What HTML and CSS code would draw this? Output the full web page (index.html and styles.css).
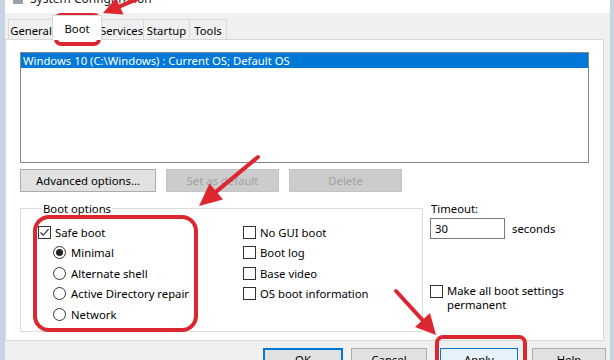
FILE: index.html
```html
<!doctype html>
<html>
<head>
	<title>System Configuration</title>
	<meta charset="utf-8"/>
	<link rel="stylesheet" href="styles.css">
</head>
<body>
	<div class="window">
		<div class="titlebar">
			<span class="app-icon"></span>
			<span class="title">System Configuration</span>
			<span class="close">&#10005;</span>
		</div>

		<div class="tabs">
			<div class="tab t-general">General</div>
			<div class="tab t-boot active">Boot</div>
			<div class="tab t-services">Services</div>
			<div class="tab t-startup">Startup</div>
			<div class="tab t-tools">Tools</div>
		</div>

		<div class="panel">
			<div class="oslist">
				<div class="os selected">Windows 10 (C:\Windows) : Current OS; Default OS</div>
			</div>

			<div class="btnrow">
				<button class="btn b-adv">Advanced options...</button>
				<button class="btn b-def" disabled>Set as default</button>
				<button class="btn b-del" disabled>Delete</button>
			</div>

			<div class="lower">
				<fieldset class="group">
					<legend>Boot options</legend>
					<div class="col col1">
						<div class="opt"><span class="check on"><svg width="11" height="11" viewBox="0 0 11 11"><path d="M1.5 5.5 L4.2 8.3 L9.6 2.2" fill="none" stroke="#222" stroke-width="1.1"/></svg></span>Safe boot</div>
						<div class="opt sub"><span class="radio on"></span>Minimal</div>
						<div class="opt sub"><span class="radio"></span>Alternate shell</div>
						<div class="opt sub"><span class="radio"></span>Active Directory repair</div>
						<div class="opt sub"><span class="radio"></span>Network</div>
					</div>
					<div class="col col2">
						<div class="opt"><span class="check"></span>No GUI boot</div>
						<div class="opt"><span class="check"></span>Boot log</div>
						<div class="opt"><span class="check"></span>Base video</div>
						<div class="opt"><span class="check"></span>OS boot information</div>
					</div>
				</fieldset>

				<div class="side">
					<div class="side-label">Timeout:</div>
					<div class="timeout">
						<span class="input">30</span>
						<span>seconds</span>
					</div>
					<div class="perm">
						<span class="check"></span>
						<span class="perm-text">Make all boot settings<br>permanent</span>
					</div>
				</div>
			</div>
		</div>

		<div class="footer">
			<button class="btn f-ok">OK</button>
			<button class="btn f-cancel">Cancel</button>
			<button class="btn f-apply">Apply</button>
			<button class="btn f-help">Help</button>
		</div>
	</div>

	<!-- red annotations drawn over the screenshot -->
	<svg class="marks" width="614" height="360" viewBox="0 0 614 360">
		<g fill="none" stroke="#dc2630" stroke-width="4" stroke-linecap="round">
			<rect x="56" y="15" width="43" height="29" rx="5"/>
			<rect x="35" y="217" width="161" height="113" rx="14"/>
			<rect x="437" y="337" width="88" height="32" rx="6"/>
			<line x1="152" y1="-7" x2="119.7" y2="6.3"/>
			<line x1="258" y1="157" x2="215.9" y2="191.9"/>
			<line x1="396" y1="291" x2="422.6" y2="320.2"/>
		</g>
		<g fill="#dc2630">
			<polygon points="103,13 123.5,14.5 116,-2"/>
			<polygon points="199,206 223,199.5 209.5,183.5"/>
			<polygon points="436,335 415,327 430,313"/>
		</g>
	</svg>
</body>
</html>
```

FILE: styles.css
```css
body{
	margin: 0;
	font-family: "Noto Sans", "Open Sans", sans-serif;
	font-size: 11.3px;
	color: #000;
}
.window{
	width: 614px;
	height: 360px;
	box-sizing: border-box;
	border-left: 5px solid #c7d4e3;
	border-right: 4px solid #c7d4e3;
	background: #f0f0f0;
	display: flex;
	flex-direction: column;
	overflow: hidden;
}

/* title bar, mostly cut off at the top */
.titlebar{
	height: 13px;
	flex: none;
	background: #fff;
	display: flex;
	overflow: hidden;
}
.app-icon{
	width: 10px;
	height: 4px;
	margin-left: 8px;
	background: #9aa3ad;
}
.title{
	margin: -9px 0 0 7px;
	line-height: 16px;
	font-size: 12px;
	color: #222;
}
.close{
	margin: -10px 0 0 auto;
	margin-right: 14px;
	font-size: 11px;
	line-height: 14px;
	color: #444;
}

/* tabs */
.tabs{
	height: 26px;
	flex: none;
	display: flex;
	align-items: flex-end;
	padding-left: 3px;
}
.tab{
	height: 20px;
	box-sizing: border-box;
	border: 1px solid #d9d9d9;
	border-bottom: none;
	border-left: none;
	padding-top: 3px;
	line-height: 16px;
	text-align: center;
	white-space: nowrap;
	background: #f0f0f0;
}
.t-general{ width: 46px; border-left: 1px solid #d9d9d9; }
.t-boot{ width: 50px; }
.t-services{ width: 44px; }
.t-startup{ width: 46px; }
.t-tools{ width: 37px; }
.tab.active{
	height: 25px;
	margin: 0 -2px -1px -2px;
	padding-top: 5px;
	background: #fff;
	border-left: 1px solid #d9d9d9;
	position: relative;
	z-index: 1;
}

/* main white panel */
.panel{
	height: 302px;
	flex: none;
	box-sizing: border-box;
	margin-right: 6px;
	border: 1px solid #d9d9d9;
	background: #fff;
	padding: 12px 0 0 14px;
}
.oslist{
	width: 569px;
	height: 111px;
	box-sizing: border-box;
	border: 1px solid #828790;
}
.os{
	height: 15px;
	line-height: 15px;
	padding-left: 2px;
	white-space: nowrap;
}
.os.selected{
	background: #0078d7;
	color: #fff;
}

.btnrow{
	display: flex;
	gap: 10px;
	margin-top: 6px;
}
.btn{
	height: 23px;
	box-sizing: border-box;
	border: 1px solid #adadad;
	background: #e1e1e1;
	font-family: inherit;
	font-size: 11.3px;
	color: #000;
	padding: 0;
}
.btn:disabled{
	background: #cccccc;
	border-color: #c4c4c4;
	color: #a2a2a2;
}
.b-adv{ width: 136px; }
.b-def{ width: 113px; }
.b-del{ width: 113px; }

/* boot options + timeout */
.lower{
	display: flex;
	margin-top: 9px;
}
.group{
	width: 403px;
	height: 131px;
	box-sizing: border-box;
	margin: 0;
	border: 1px solid #dcdcdc;
	padding: 6px 0 0 17px;
	display: flex;
}
.group legend{
	padding: 0 1px;
	margin-left: 4px;
	line-height: 15px;
}
.col1{ width: 205px; }
.opt{
	height: 20.5px;
	display: flex;
	align-items: center;
	white-space: nowrap;
}
.opt.sub{ padding-left: 15px; }
.check{
	width: 13px;
	height: 13px;
	box-sizing: border-box;
	border: 1px solid #333;
	margin-right: 4px;
	display: flex;
	align-items: center;
	justify-content: center;
	flex: none;
	background: #fff;
}
.radio{
	width: 13px;
	height: 13px;
	box-sizing: border-box;
	border: 1px solid #333;
	border-radius: 50%;
	margin-right: 5px;
	display: flex;
	align-items: center;
	justify-content: center;
	flex: none;
}
.radio.on::after{
	content: "";
	width: 7px;
	height: 7px;
	border-radius: 50%;
	background: #222;
}

.side{
	margin-left: 7px;
	display: flex;
	flex-direction: column;
}
.side-label{
	line-height: 15px;
	padding-left: 1px;
}
.timeout{
	display: flex;
	align-items: center;
	gap: 7px;
	margin-top: 2px;
}
.input{
	width: 75px;
	height: 21px;
	box-sizing: border-box;
	border: 1px solid #7a7a7a;
	padding-left: 4px;
	line-height: 19px;
}
.perm{
	display: flex;
	align-items: flex-start;
	margin-top: 45px;
}
.perm .check{ margin-top: 1px; }
.perm-text{
	line-height: 13.5px;
}

/* bottom buttons */
.footer{
	display: flex;
	justify-content: flex-end;
	padding: 7px 4px 0 0;
}
.footer .btn{ flex: none; }
.f-ok{ width: 80px; border: 1px solid #0078d7; box-shadow: inset 0 0 0 1px #0078d7; }
.f-cancel{ width: 76px; margin-left: 8px; }
.f-apply{ width: 78px; margin-left: 13px; background: #e5f1fb; border-color: #0078d7; }
.f-help{ width: 74px; margin-left: 14px; }

.marks{
	position: absolute;
	left: 0;
	top: 0;
	pointer-events: none;
}
```
